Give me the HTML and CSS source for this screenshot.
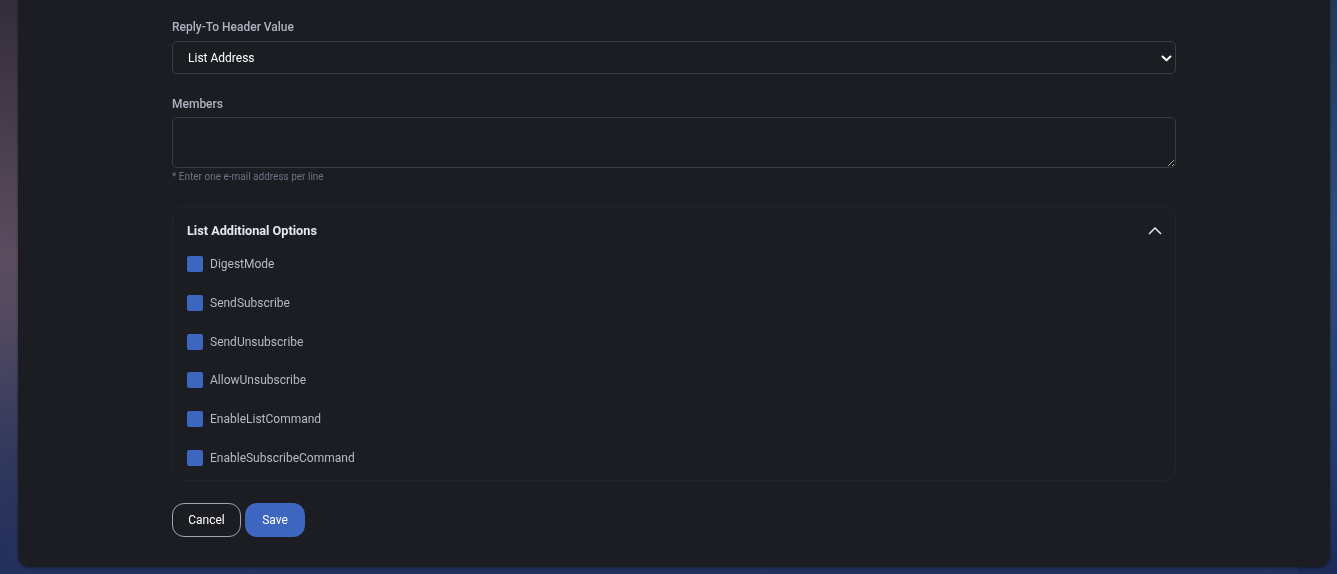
FILE: index.html
```html
<!DOCTYPE html>
<html lang="en">
<head>
    <meta charset="utf-8"/>
    <title>Edit Mailing List</title>
    <link rel="stylesheet" href="styles.css">
</head>
<body>
<div class="panel">
    <form class="listForm">
        <div class="field">
            <label class="field-label" for="replyTo">Reply-To Header Value</label>
            <div class="select-wrap">
                <select id="replyTo" class="field-select">
                    <option>List Address</option>
                    <option>Sender Address</option>
                </select>
                <svg class="select-arrow" width="11" height="7" viewBox="0 0 11 7">
                    <path d="M1.5 1.5 L5.5 5.2 L9.5 1.5" fill="none" stroke="#fff" stroke-width="2" stroke-linecap="round" stroke-linejoin="round"/>
                </svg>
            </div>
        </div>

        <div class="field">
            <label class="field-label" for="members">Members</label>
            <textarea id="members" class="field-textarea"></textarea>
            <span class="field-help">* Enter one e-mail address per line</span>
        </div>

        <div class="optionsCard">
            <div class="optionsCard-head">
                <span>List Additional Options</span>
                <svg width="14" height="8" viewBox="0 0 14 8">
                    <path d="M1 7 L7 1 L13 7" fill="none" stroke="#dfe6f2" stroke-width="1.5"/>
                </svg>
            </div>
            <ul class="optionsList">
                <li><span class="check"></span>DigestMode</li>
                <li><span class="check"></span>SendSubscribe</li>
                <li><span class="check"></span>SendUnsubscribe</li>
                <li><span class="check"></span>AllowUnsubscribe</li>
                <li><span class="check"></span>EnableListCommand</li>
                <li><span class="check"></span>EnableSubscribeCommand</li>
            </ul>
        </div>

        <div class="actions">
            <button type="button" class="btn btn-cancel">Cancel</button>
            <button type="button" class="btn btn-save">Save</button>
        </div>
    </form>
</div>
</body>
</html>
```

FILE: styles.css
```css
* {
    margin: 0;
    padding: 0;
    box-sizing: border-box;
}

html, body {
    height: 574px;
    overflow: hidden;
}

body {
    font-family: Roboto, "Liberation Sans", sans-serif;
    font-size: 12px;
    color: #fff;
    background:
        linear-gradient(180deg, rgba(30, 40, 80, 0) 0%, rgba(30, 40, 80, 0) 55%, rgba(36, 48, 92, 0.9) 100%),
        linear-gradient(180deg, #332d3b 0%, #5b4d5f 45%, #4a4660 70%, #2a3358 100%);
}

body::before {
    content: "";
    position: fixed;
    top: 0;
    right: 0;
    width: 40px;
    height: 100%;
    background: linear-gradient(180deg, #23385a 0%, #2c4f7a 40%, #263f6c 75%, #1e2a58 100%);
    z-index: -1;
}

.panel {
    margin-left: 18px;
    width: 1312px;
    height: 567px;
    background: #1c1d22;
    border-radius: 0 0 12px 12px;
    box-shadow: 0 1px 3px rgba(0, 0, 0, 0.4);
    padding: 18px 0 0 154px;
}

.listForm {
    width: 1004px;
}

.field {
    display: flex;
    flex-direction: column;
    margin-bottom: 21px;
}

.field-label {
    color: #aeb4c0;
    font-size: 12px;
    font-weight: 500;
    line-height: 18px;
    margin-bottom: 5px;
}

.select-wrap {
    position: relative;
}

.field-select {
    width: 100%;
    height: 33px;
    appearance: none;
    background: #1c1d22;
    border: 1px solid #3a3c42;
    border-radius: 5px;
    color: #fff;
    font-family: inherit;
    font-size: 12px;
    padding: 0 15px;
    outline: none;
}

.select-arrow {
    position: absolute;
    right: 4px;
    top: 14px;
}

.field-textarea {
    height: 51px;
    width: 100%;
    margin-top: -1px;
    background: #1c1d22;
    border: 1px solid #3a3c42;
    border-radius: 5px;
    color-scheme: dark;
    resize: vertical;
    outline: none;
}

.field-help {
    color: #6c7282;
    font-size: 10px;
    line-height: 13px;
    margin-top: 2px;
}

.optionsCard {
    margin-top: 23px;
    border: 1px solid #22242a;
    border-radius: 12px;
    padding: 15px 14px 15px 14px;
    height: 275px;
}

.optionsCard-head {
    display: flex;
    justify-content: space-between;
    align-items: center;
    color: #e3e9f4;
    font-weight: 700;
    font-size: 12.7px;
    line-height: 18px;
    margin-right: -1px;
}

.optionsList {
    list-style: none;
    display: flex;
    flex-direction: column;
    gap: 22.8px;
    margin-top: 16px;
}

.optionsList li {
    display: flex;
    align-items: center;
    height: 16px;
    color: #b6bac3;
    font-size: 12px;
}

.check {
    width: 16px;
    height: 16px;
    border-radius: 2px;
    background: #3d66c1;
    margin-right: 7px;
}

.actions {
    display: flex;
    gap: 4px;
    margin-top: 22px;
}

.btn {
    height: 34px;
    border-radius: 12px;
    font-family: inherit;
    font-size: 12px;
    font-weight: 400;
    color: #fff;
    cursor: pointer;
}

.btn-cancel {
    width: 69px;
    background: transparent;
    border: 1px solid #a4a4ae;
}

.btn-save {
    width: 60px;
    background: #3d66c1;
    border: 0;
}
```
